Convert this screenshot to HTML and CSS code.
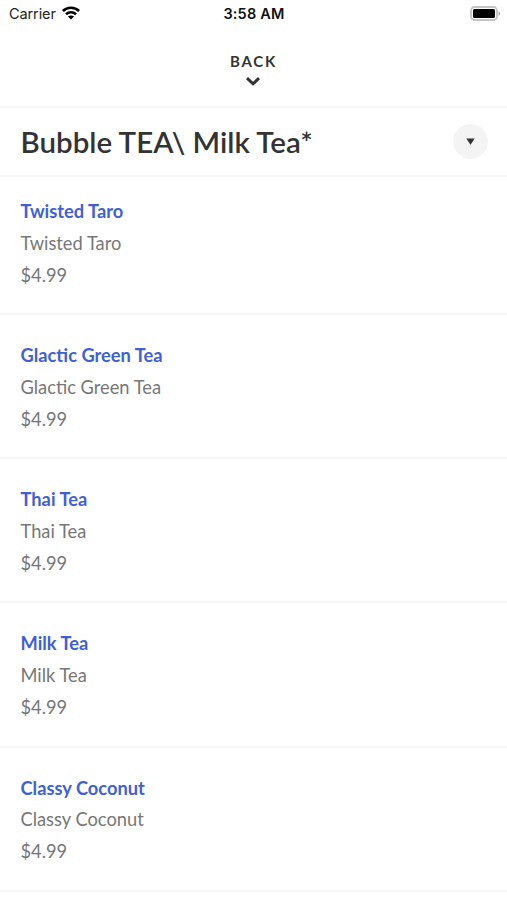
FILE: index.html
```html
<!DOCTYPE html>
<html lang="en">
<head>
  <meta charset="UTF-8">
  <meta name="viewport" content="width=device-width, initial-scale=1.0">
  <title>Bubble Tea Menu</title>
  <link rel="stylesheet" href="styles.css">
</head>
<body>
  <div class="status-bar">
    <div class="carrier">
      <span>Carrier</span>
      <svg class="wifi" width="18" height="14" viewBox="0 0 18 14" fill="none" stroke="#000" stroke-width="2.6">
        <path d="M.9 5C5.300.6 12.700.6 17.100 5"/>
        <path d="M4 8.200c2.800-2.700 7.200-2.700 10 0"/>
        <path d="M9 13.600L5.900 10.500c1.700-1.500 4.500-1.500 6.200 0z" fill="#000" stroke="none"/>
      </svg>
    </div>
    <div class="time">3:58 AM</div>
    <div class="battery">
      <svg width="31" height="15" viewBox="0 0 31 15">
        <rect x="1" y="1" width="26" height="13" rx="3.500" fill="#fff" stroke="#c4c4c4" stroke-width="1.800"/>
        <rect x="3" y="3" width="22" height="9" rx="1.500" fill="#000"/>
        <path d="M28.500 5.200c2.300.9 2.300 3.700 0 4.600z" fill="#b0b0b0"/>
      </svg>
    </div>
  </div>

  <header class="back">
    <span>BACK</span>
    <svg width="14" height="9" viewBox="0 0 14 9" fill="none" stroke="#333" stroke-width="3">
      <path d="M1 1.200l6 5.600 6-5.600"/>
    </svg>
  </header>

  <div class="category">
    <h1>Bubble TEA\ Milk Tea*</h1>
    <button class="toggle" aria-label="Categories">
      <svg width="9" height="7" viewBox="0 0 9 7"><path d="M.3.500h8.400L4.500 6.800z" fill="#333"/></svg>
    </button>
  </div>

  <ul class="menu-list">
    <li class="menu-item">
      <h3>Twisted Taro</h3>
      <p>Twisted Taro</p>
      <p>$4.99</p>
    </li>
    <li class="menu-item">
      <h3>Glactic Green Tea</h3>
      <p>Glactic Green Tea</p>
      <p>$4.99</p>
    </li>
    <li class="menu-item">
      <h3>Thai Tea</h3>
      <p>Thai Tea</p>
      <p>$4.99</p>
    </li>
    <li class="menu-item">
      <h3>Milk Tea</h3>
      <p>Milk Tea</p>
      <p>$4.99</p>
    </li>
    <li class="menu-item">
      <h3>Classy Coconut</h3>
      <p>Classy Coconut</p>
      <p>$4.99</p>
    </li>
  </ul>
</body>
</html>
```

FILE: styles.css
```css
* {
  box-sizing: border-box;
}
body {
  font-family: Lato, sans-serif;
  margin: 0;
  background-color: #fff;
  color: #333;
}
.status-bar {
  display: grid;
  grid-template-columns: 1fr auto 1fr;
  align-items: center;
  height: 27px;
  padding: 0 7px 0 9px;
  font-family: Inter, sans-serif;
  font-size: 14.5px;
  color: #000;
}
.carrier {
  display: flex;
  align-items: center;
  gap: 6px;
  color: #222;
  letter-spacing: -0.1px;
}
.wifi {
  margin-bottom: 2px;
}
.time {
  margin-right: 1px;
  color: #111;
  font-weight: 600;
  letter-spacing: 0.2px;
}
.battery {
  display: flex;
  justify-content: flex-end;
  margin: 0 -1px 1px 0;
}
.back {
  display: flex;
  flex-direction: column;
  align-items: center;
  height: 81px;
  padding: 24px 1px 0 0;
  border-bottom: 2px solid #f6f6f6;
  font-size: 15px;
  font-weight: 700;
  line-height: 20px;
  letter-spacing: 1.8px;
}
.back span {
  margin-right: -1px;
}
.back svg {
  margin-top: 6px;
}
.category {
  display: flex;
  align-items: center;
  justify-content: space-between;
  height: 69px;
  padding: 0 19px 0 20.5px;
  border-bottom: 2px solid #f6f6f6;
}
h1 {
  margin: 0;
  font-size: 29.5px;
  font-weight: 600;
}
.toggle {
  display: flex;
  align-items: center;
  justify-content: center;
  width: 35px;
  height: 35px;
  padding: 0;
  border: none;
  border-radius: 50%;
  background-color: #f4f4f4;
}
.menu-list {
  list-style: none;
  margin: 0;
  padding: 0;
}
.menu-item {
  height: 144.2px;
  padding: 25px 20.5px 0;
  border-bottom: 2px solid #f6f6f6;
  font-size: 18.3px;
  line-height: 31.8px;
}
.menu-item:first-child {
  height: 138px;
  padding-top: 19px;
}
.menu-item h3 {
  margin: 0;
  color: #415fd9;
  font-size: inherit;
  font-weight: 700;
}
.menu-item p {
  margin: 0;
  color: #777;
}
```
